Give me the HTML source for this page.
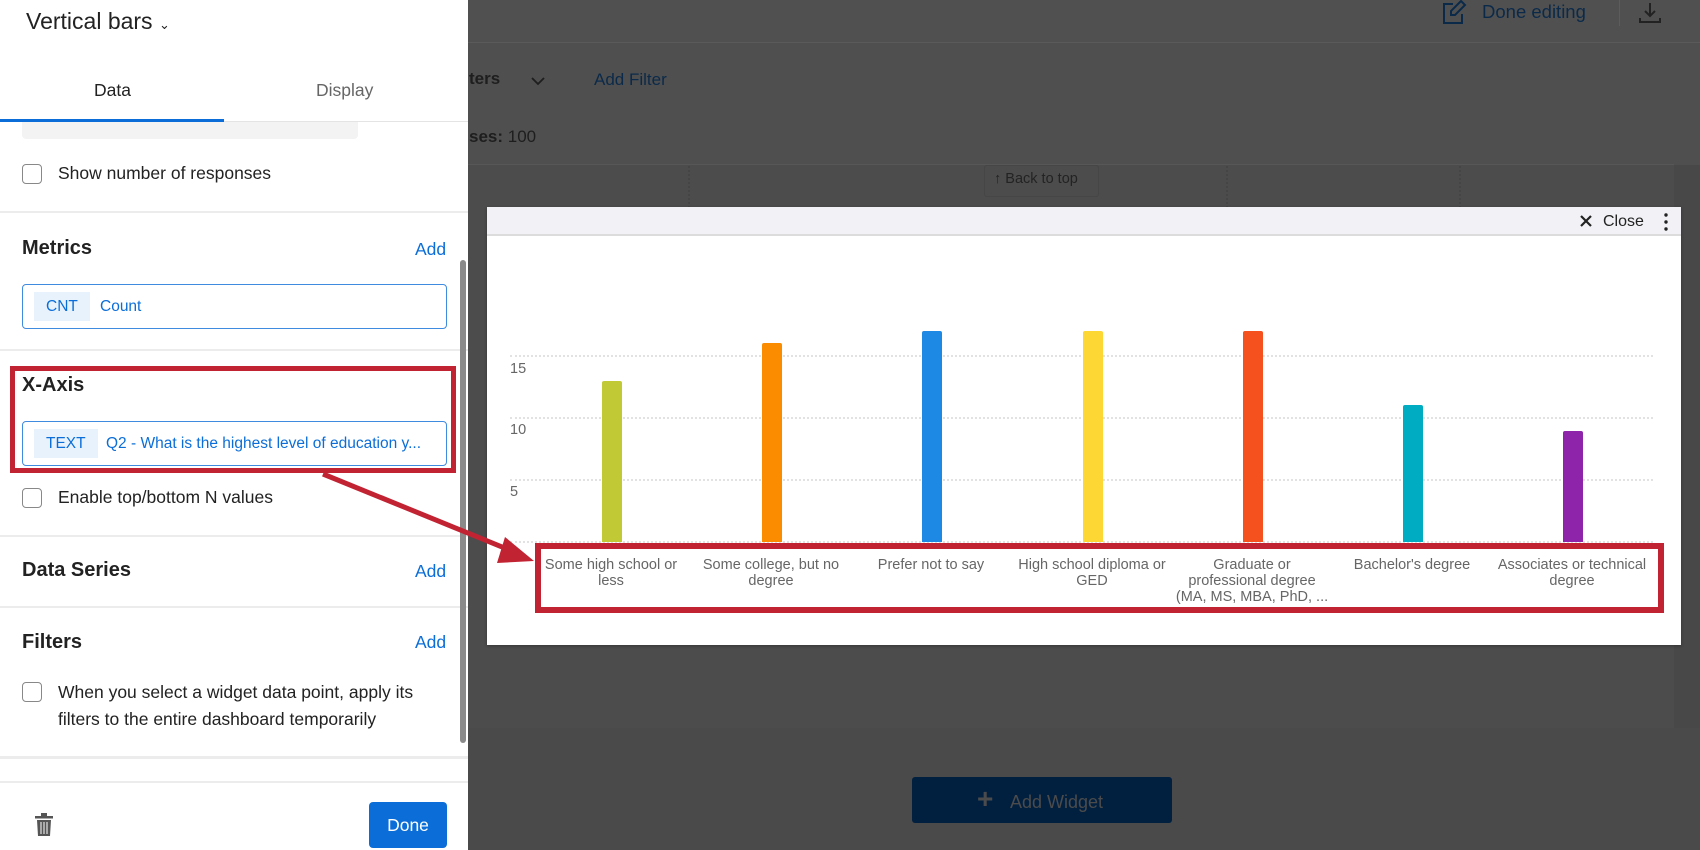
<!DOCTYPE html>
<html><head><meta charset="utf-8"><style>
*{box-sizing:border-box;margin:0;padding:0}
body{width:1700px;height:850px;overflow:hidden;position:relative;background:#4f4f4f;font-family:"Liberation Sans",sans-serif}
.a{position:absolute}
.side{left:0;top:0;width:468px;height:850px;background:#fff}
.t{position:absolute;white-space:nowrap}
.h{font-weight:bold;font-size:20px;color:#222}
.add{color:#0b6ed8;font-size:17.5px}
.cb{position:absolute;width:20px;height:20px;border:1.5px solid #888;border-radius:4px;background:#fff}
.lbl{font-size:17.5px;color:#222}
.div{position:absolute;left:0;width:468px;height:2px;background:#ececec}
.chip{position:absolute;left:22px;width:425px;height:45px;border:1.5px solid #3f8be0;border-radius:4px}
.tag{position:absolute;left:11px;top:7px;height:29px;background:#e8f2fd;color:#0b6ed8;font-size:15.5px;line-height:29px;padding:0 12px}
.ct{position:absolute;top:7px;line-height:29px;color:#0b6ed8;font-size:15.5px;white-space:nowrap}
.bar{position:absolute;width:20px;bottom:308px;border-radius:2px 2px 0 0}
.xl{position:absolute;top:557px;width:160px;text-align:center;font-size:14.5px;line-height:16px;color:#666}
.grid{position:absolute;left:510px;width:1143px;border-top:2px dotted #e2e2e2}
.yl{position:absolute;left:510px;font-size:14.5px;color:#666}
</style></head><body>
<div class="a" style="left:468px;top:0;width:1232px;height:43px;background:#505050;border-bottom:1px solid #5a5a5a"></div>
<svg class="a" style="left:1441px;top:0" width="26" height="26" viewBox="0 0 26 26" fill="none" stroke="#0b2a4a" stroke-width="2"><path d="M12 4H3v19h18v-9"/><path d="M20 1l4 4-10 10H10v-4z"/></svg>
<div class="t" style="left:1482px;top:1px;font-size:18.5px;color:#0b2a4a">Done editing</div>
<div class="a" style="left:1619px;top:0;width:1px;height:26px;background:#5c5c5c"></div>
<svg class="a" style="left:1638px;top:2px" width="24" height="22" viewBox="0 0 24 22" fill="none" stroke="#222" stroke-width="2"><path d="M12 1v13M7 9l5 5 5-5M2 16v4h20v-4"/></svg>
<div class="t" style="left:469px;top:69px;font-size:17px;font-weight:bold;color:#1e1e1e">ters</div>
<svg class="a" style="left:530px;top:76px" width="16" height="10" viewBox="0 0 16 10" fill="none" stroke="#1e1e1e" stroke-width="1.8"><path d="M2 2l6 6 6-6"/></svg>
<div class="t" style="left:594px;top:70px;font-size:17px;color:#0b2a4a">Add Filter</div>
<div class="t" style="left:469px;top:127px;font-size:17px;color:#1e1e1e"><b>ses:</b> 100</div>
<div class="a" style="left:468px;top:164px;width:1206px;height:564px;background:#4c4c4c;border-top:1px solid #575757"></div>
<div class="a" style="left:468px;top:728px;width:1232px;height:122px;background:#4a4a4a"></div>
<div class="a" style="left:1674px;top:165px;width:26px;height:563px;background:#484848"></div>
<div class="a" style="left:688px;top:166px;height:42px;border-left:2px dotted #454545"></div>
<div class="a" style="left:1226px;top:166px;height:42px;border-left:2px dotted #454545"></div>
<div class="a" style="left:1459px;top:166px;height:42px;border-left:2px dotted #454545"></div>
<div class="a" style="left:984px;top:165px;width:115px;height:32px;border:1px solid #464646;border-radius:3px"></div>
<div class="t" style="left:994px;top:171px;font-size:14.5px;color:#232323">↑ Back to top</div>
<div class="a" style="left:912px;top:777px;width:260px;height:46px;background:#012040;border-radius:3px"></div>
<div class="t" style="left:977px;top:783px;font-size:28px;font-weight:bold;color:#4b4b4b">+</div>
<div class="t" style="left:1010px;top:792px;font-size:18px;color:#4b4b4b">Add Widget</div>

<div class="a" style="left:487px;top:207px;width:1194px;height:438px;background:#fff;box-shadow:0 1px 3px rgba(0,0,0,.3)"></div>
<div class="a" style="left:487px;top:207px;width:1194px;height:29px;background:#f2f2f6;border-bottom:2px solid #dcdcdc"></div>
<svg class="a" style="left:1579px;top:214px" width="14" height="14" viewBox="0 0 14 14" stroke="#222" stroke-width="2.2"><path d="M2 2l10 10M12 2L2 12"/></svg>
<div class="t" style="left:1603px;top:213px;font-size:16px;color:#222">Close</div>
<svg class="a" style="left:1663px;top:212px" width="6" height="20"><circle cx="3" cy="3" r="1.7" fill="#222"/><circle cx="3" cy="10" r="1.7" fill="#222"/><circle cx="3" cy="17" r="1.7" fill="#222"/></svg>

<div class="grid" style="top:355px"></div>
<div class="grid" style="top:417px"></div>
<div class="grid" style="top:479px"></div>
<div class="grid" style="top:541px"></div>
<div class="yl" style="top:361px">15</div>
<div class="yl" style="top:422px">10</div>
<div class="yl" style="top:484px">5</div>
<div class="bar" style="left:602px;height:161px;background:#c1c934"></div>
<div class="bar" style="left:762px;height:199px;background:#fb8c00"></div>
<div class="bar" style="left:922px;height:211px;background:#1e88e5"></div>
<div class="bar" style="left:1083px;height:211px;background:#fdd835"></div>
<div class="bar" style="left:1243px;height:211px;background:#f4511e"></div>
<div class="bar" style="left:1403px;height:137px;background:#00acc1"></div>
<div class="bar" style="left:1563px;height:111px;background:#8e24aa"></div>
<div class="xl" style="left:531px">Some high school or less</div>
<div class="xl" style="left:691px">Some college, but no degree</div>
<div class="xl" style="left:851px">Prefer not to say</div>
<div class="xl" style="left:1012px">High school diploma or GED</div>
<div class="xl" style="left:1162px;width:180px;white-space:nowrap">Graduate or<br>professional degree<br>(MA, MS, MBA, PhD, ...</div>
<div class="xl" style="left:1332px">Bachelor's degree</div>
<div class="xl" style="left:1492px">Associates or technical degree</div>
<div class="a" style="left:535px;top:543px;width:1129px;height:70px;border:6px solid #c22333"></div>

<div class="a side">
<div class="t" style="left:26px;top:8px;font-size:23px;color:#222">Vertical bars <span style="font-size:13px">⌄</span></div>
<div class="t" style="left:94px;top:80px;font-size:17.5px;color:#222">Data</div>
<div class="t" style="left:316px;top:80px;font-size:17.5px;color:#666">Display</div>
<div class="div" style="top:121px;height:1px;background:#e4e4e4"></div>
<div class="a" style="left:0;top:119px;width:224px;height:3px;background:#0b6ed8"></div>
<div class="a" style="left:22px;top:122px;width:336px;height:17px;background:#f3f3f3;border-radius:0 0 4px 4px"></div>
<div class="cb" style="left:22px;top:164px"></div>
<div class="t lbl" style="left:58px;top:163px">Show number of responses</div>
<div class="div" style="top:211px"></div>
<div class="t h" style="left:22px;top:237px">Metrics</div>
<div class="t add" style="left:415px;top:239px">Add</div>
<div class="chip" style="top:284px"><div class="tag">CNT</div><div class="ct" style="left:77px">Count</div></div>
<div class="div" style="top:349px"></div>
<div class="t h" style="left:22px;top:374px">X-Axis</div>
<div class="chip" style="top:421px"><div class="tag">TEXT</div><div class="ct" style="left:83px">Q2 - What is the highest level of education y...</div></div>
<div class="cb" style="left:22px;top:488px"></div>
<div class="t lbl" style="left:58px;top:487px">Enable top/bottom N values</div>
<div class="div" style="top:535px"></div>
<div class="t h" style="left:22px;top:559px">Data Series</div>
<div class="t add" style="left:415px;top:561px">Add</div>
<div class="div" style="top:606px"></div>
<div class="t h" style="left:22px;top:631px">Filters</div>
<div class="t add" style="left:415px;top:632px">Add</div>
<div class="cb" style="left:22px;top:682px"></div>
<div class="t lbl" style="left:58px;top:679px;line-height:27px">When you select a widget data point, apply its<br>filters to the entire dashboard temporarily</div>
<div class="div" style="top:756px;height:3px"></div>
<div class="div" style="top:781px"></div>
<svg class="a" style="left:34px;top:813px" width="20" height="24" viewBox="0 0 20 24" fill="#555"><rect x="1" y="3" width="18" height="2.5"/><rect x="7" y="0" width="6" height="3"/><path d="M3 7h14l-1 16H4z"/><path d="M7 9v12M10 9v12M13 9v12" stroke="#fff" stroke-width="1"/></svg>
<div class="a" style="left:369px;top:802px;width:78px;height:46px;background:#0b6ed8;border-radius:4px;color:#fff;font-size:17.5px;line-height:46px;text-align:center">Done</div>
<div class="a" style="left:460px;top:260px;width:6px;height:483px;background:#8a8a8a;border-radius:3px"></div>
<div class="a" style="left:10px;top:366px;width:446px;height:107px;border:5px solid #c22333"></div>
</div>
<svg class="a" style="left:0;top:0" width="1700" height="850"><path d="M323 474L512 551" stroke="#c22333" stroke-width="5"/><path d="M534 561L505 537L497 563Z" fill="#c22333"/></svg>
</body></html>
